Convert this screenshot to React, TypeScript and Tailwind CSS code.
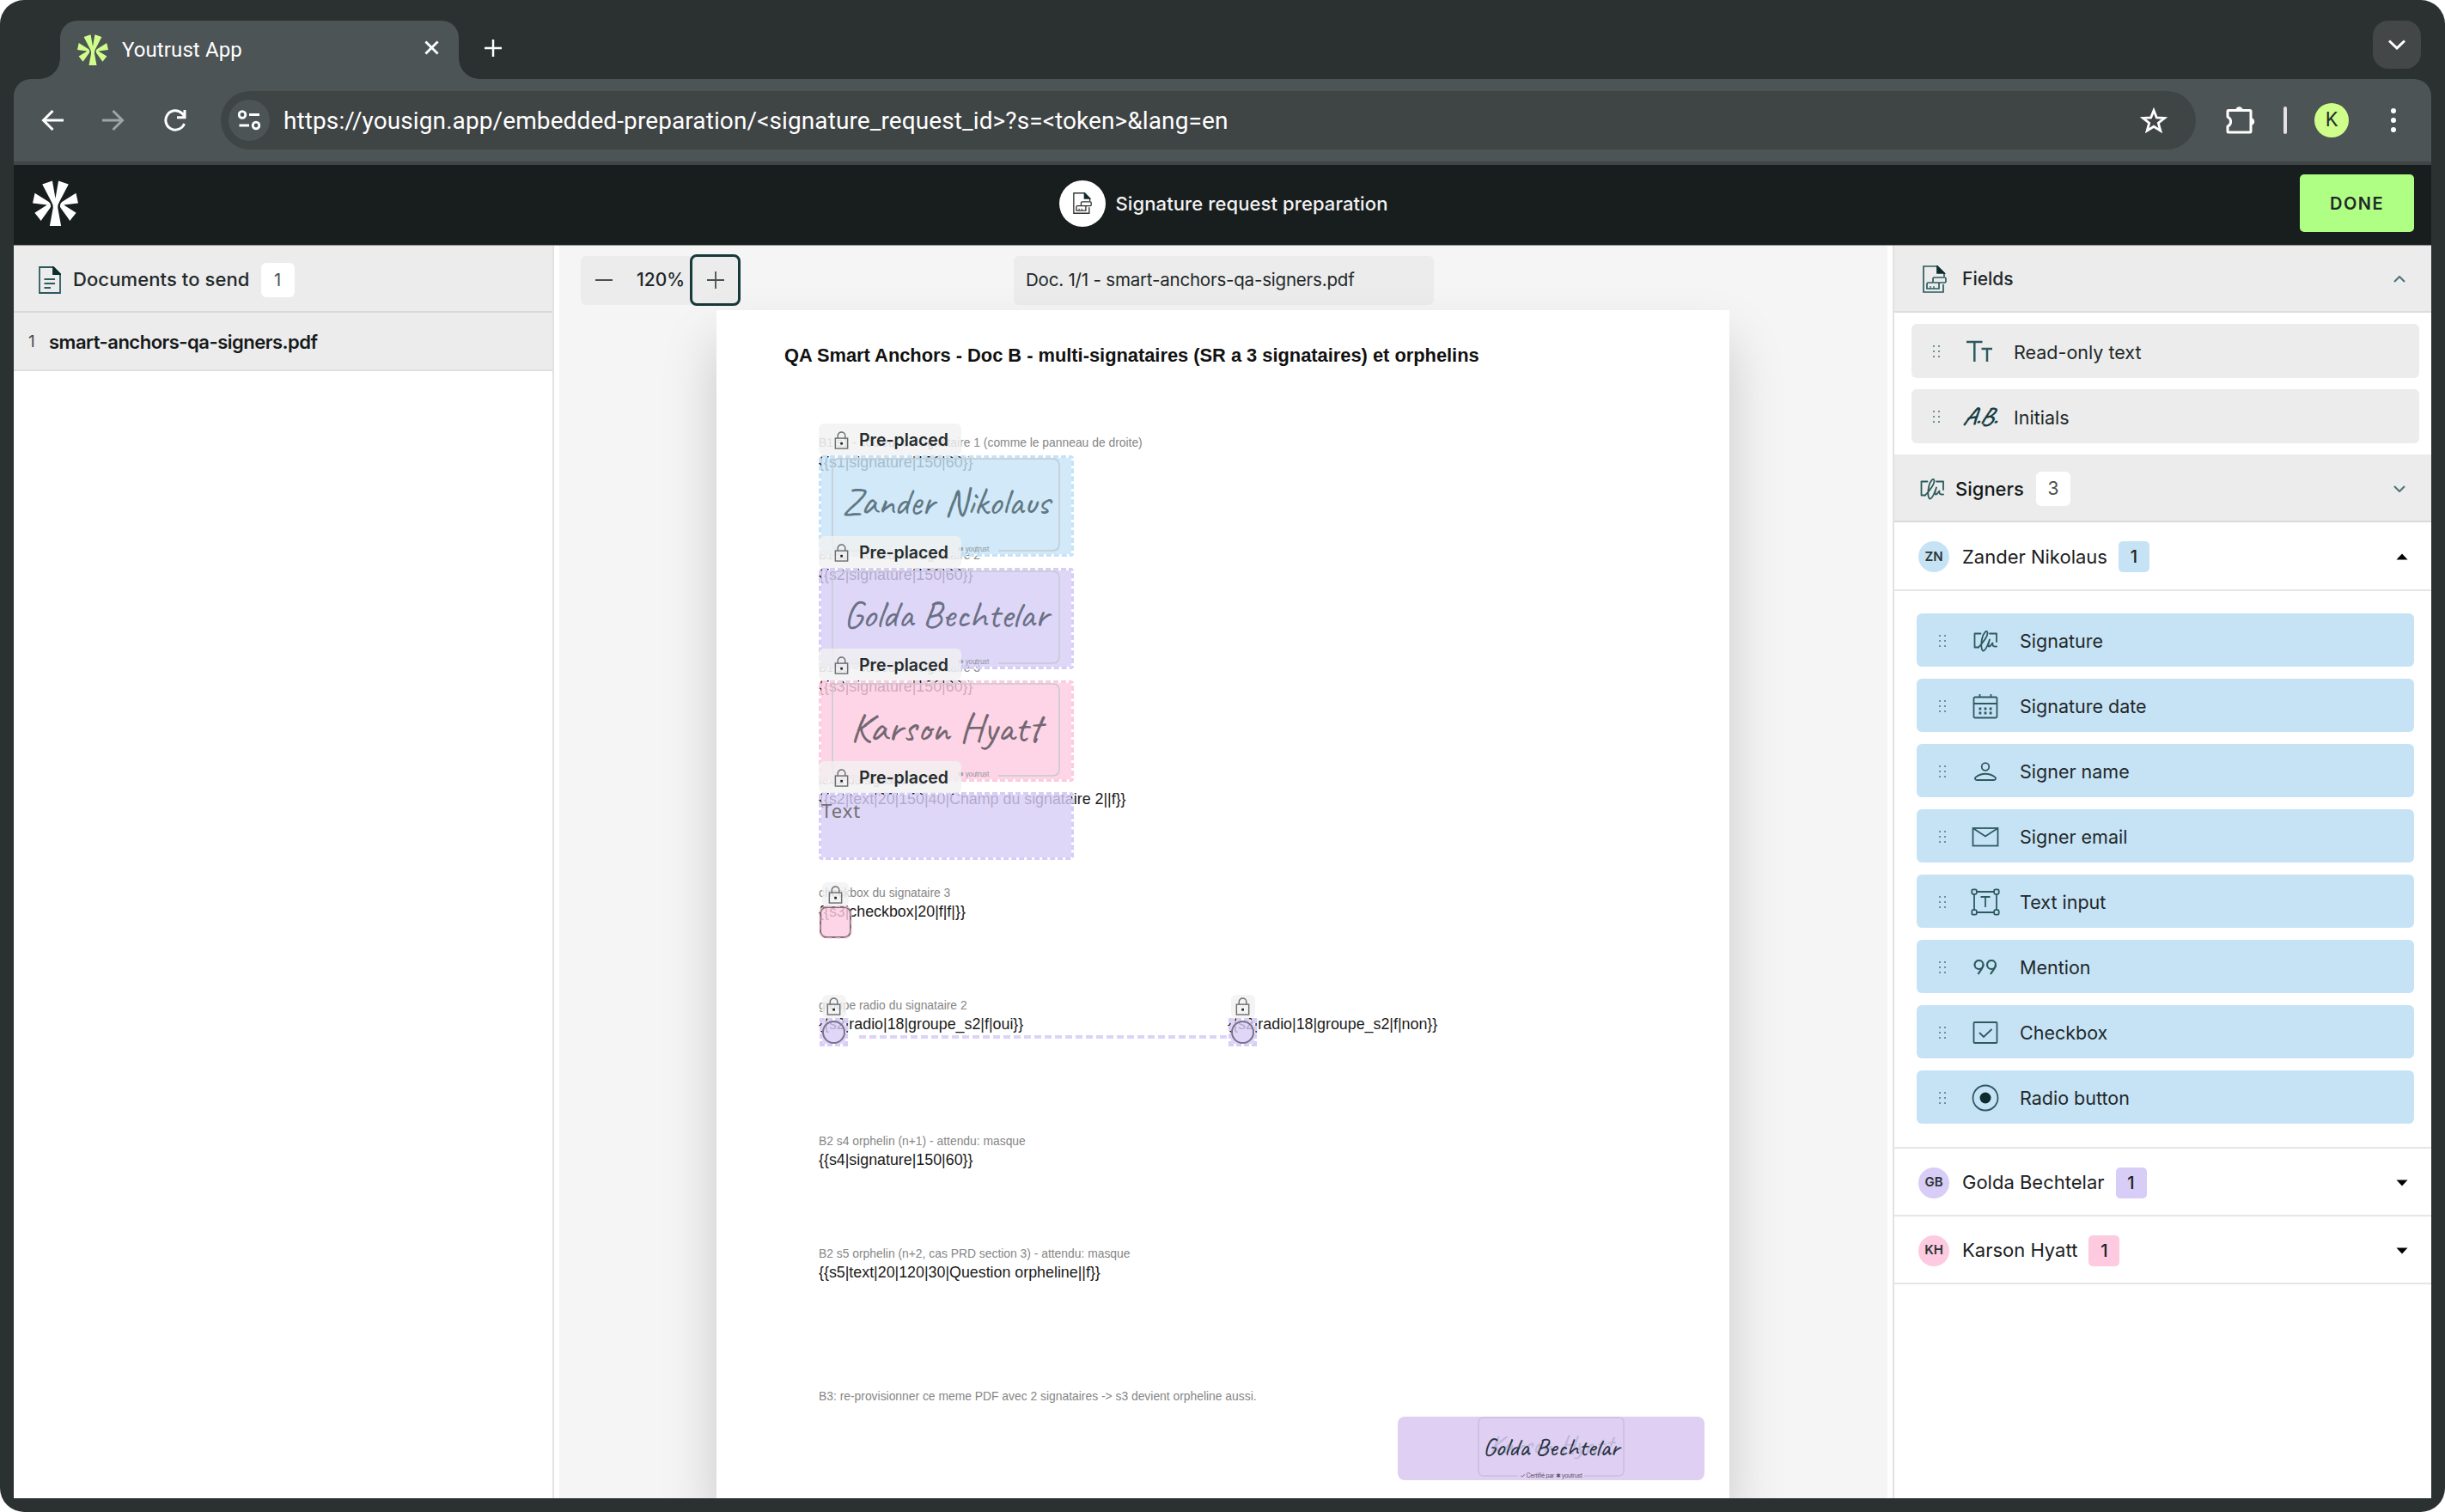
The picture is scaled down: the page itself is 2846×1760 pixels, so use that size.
import type { ReactNode } from 'react';
import { clsx } from 'clsx';

type IconProps = { className?: string };

const Logo = ({ className }: IconProps) => (
  <svg viewBox="0 0 52 52" fill="currentColor" className={className}>
    <path d="M11 4.5 22.5.5 26 20.5 29.5.5 41 4.5 30 25.5Q28.4 28.5 28.8 32L32.5 52H19.5L23.2 32Q23.6 28.5 22 25.5Z" />
    <path d="M2.5 14.5 18.5 24.5Q22 27.5 20 31.5L9.5 46 2.3 37 16.5 28 0 26Z" />
    <path d="M49.5 14.5 33.5 24.5Q30 27.5 32 31.5L42.5 46 49.7 37 35.5 28 52 26Z" />
  </svg>
);

const DocIcon = ({ className }: IconProps) => (
  <svg viewBox="0 0 26 32" fill="none" stroke="#2c5a5e" strokeWidth="1.8" className={className}>
    <path d="M1 1H17L25 9V31H1Z" />
    <path d="M17 1V9H25Z" fill="#0c2c2e" stroke="#0c2c2e" />
    <path d="M6.5 15H19M6.5 20H19M6.5 25H14" />
  </svg>
);

const FieldsIcon = ({ className }: IconProps) => (
  <svg viewBox="0 0 28 32" fill="none" stroke="currentColor" strokeWidth="1.7" className={className}>
    <path d="M25 13V9L17 1H1V31H24V22" />
    <path d="M17 1V9H25Z" fill="#0c2c2e" stroke="#0c2c2e" />
    <rect x="12" y="14" width="15" height="6" rx="1.5" />
    <path d="M12 20H6.5a1.5 1.5 0 0 0-1.5 1.5V27H19V20" />
    <path d="M9 27V24M13 27V24" strokeWidth="1.2" />
  </svg>
);

const SignatureIcon = () => (
  <svg viewBox="0 0 28 26" fill="none" stroke="#2c5a5e" strokeWidth="1.8" strokeLinecap="round" strokeLinejoin="round" className="h-[26px] w-7">
    <path d="M8.5 4.5H1.5V20.5H6M19 4.5H27V14" />
    <path d="M6 20.5C11 15 17 8 16.5 3.5C16-.5 11.5 3.5 10 11C8.5 19 9.5 25 12 24.5C15 24 17.5 15.5 19 11.5C17.5 16 16.5 19.5 18.5 19.5C20.5 19.5 21 16.5 22.5 15.5C22 19 23.5 20 27 19.5" />
  </svg>
);

const CalendarIcon = () => (
  <svg viewBox="0 0 30 30" fill="none" stroke="#2c5a5e" strokeWidth="1.8" className="size-[30px]">
    <rect x="1.5" y="4.5" width="27" height="24" rx="1.5" />
    <path d="M1.5 12H28.5M8.5 1V5M21.5 1V5" />
    <path d="M7.5 18H22.5M7.5 23H22.5" strokeWidth="2.8" strokeDasharray="2.8 3.3" />
  </svg>
);

const PersonIcon = () => (
  <svg viewBox="0 0 26 22" fill="none" stroke="#2c5a5e" strokeWidth="1.8" className="h-[22px] w-[26px]">
    <circle cx="13" cy="5.5" r="4.3" />
    <path d="M3 21H23C25.500 21 25.500 18.500 24 17.500C18 12.500 8 12.500 2 17.500C.5 18.500.5 21 3 21Z" />
  </svg>
);

const MailIcon = () => (
  <svg viewBox="0 0 32 24" fill="none" stroke="#2c5a5e" strokeWidth="1.8" className="h-6 w-8">
    <rect x="1.5" y="2" width="29" height="20.5" />
    <path d="M1.5 2 16 11.5 30.5 2" />
  </svg>
);

const TextInputIcon = () => (
  <svg viewBox="0 0 34 32" fill="none" stroke="#2c5a5e" strokeWidth="1.8" className="h-8 w-[34px]">
    <path d="M7 4H27M7 28H27M4 7V25M30 7V25M11.5 10H22.5M17 10V22" />
    <rect x="1.3" y="1.3" width="5.5" height="5.5" rx="1.5" />
    <rect x="27.2" y="1.3" width="5.5" height="5.5" rx="1.5" />
    <rect x="1.3" y="25.2" width="5.5" height="5.5" rx="1.5" />
    <rect x="27.2" y="25.2" width="5.5" height="5.5" rx="1.5" />
  </svg>
);

const MentionIcon = () => (
  <svg viewBox="0 0 28 18" fill="none" stroke="#2c5a5e" strokeWidth="2.2" className="h-[18px] w-7">
    <circle cx="6.5" cy="6" r="5" />
    <path d="M11.5 6C11.5 10 8 12.5 5.5 17" />
    <circle cx="21" cy="6" r="5" />
    <path d="M26 6C26 10 22.5 12.5 20 17" />
  </svg>
);

const CheckboxIcon = () => (
  <svg viewBox="0 0 30 26" fill="none" stroke="#2c5a5e" strokeWidth="1.8" className="h-[26px] w-[30px]">
    <rect x="1.5" y="1" width="27" height="24" rx="1" />
    <path d="M8 13 13 18 22.5 9" />
  </svg>
);

const RadioIcon = () => (
  <svg viewBox="0 0 32 32" fill="none" stroke="#2c5a5e" strokeWidth="1.8" className="size-8">
    <circle cx="16" cy="16" r="14.5" />
    <circle cx="16" cy="16" r="6.5" fill="#0c2c2e" stroke="none" />
  </svg>
);

const ReadOnlyTextIcon = () => (
  <svg viewBox="0 0 32 26" fill="none" stroke="#2c5a5e" strokeWidth="2.5" className="h-[26px] w-8">
    <path d="M1 2H19.5M10.3 2V25M18.5 10H31M25 10V25" />
  </svg>
);

const InitialsIcon = () => (
  <span className="text-[29px] font-bold italic tracking-[-0.5px] text-[#173f43] [font-family:Caveat,cursive]">A.B.</span>
);

const LockIcon = () => (
  <svg viewBox="0 0 17 22" fill="none" stroke="#6b6f70" strokeWidth="1.5" className="h-[21px] w-[17px] shrink-0">
    <rect x="1" y="8.5" width="15" height="12.5" />
    <path d="M4 8.5V5.5a4.5 4.5 0 0 1 9 0V8.5" />
    <rect x="7.2" y="13.5" width="2.8" height="2.8" fill="#222" stroke="none" />
  </svg>
);

const Grip = () => (
  <svg viewBox="0 0 10 16" fill="#6d9196" className="h-4 w-2.5">
    {[2, 8, 14].map((y) => (
      <g key={y}>
        <rect x="1" y={y - 1} width="2" height="2" />
        <rect x="7" y={y - 1} width="2" height="2" />
      </g>
    ))}
  </svg>
);

const Chevron = ({ up }: { up?: boolean }) => (
  <svg viewBox="0 0 14 8" fill="none" stroke="#4a7377" strokeWidth="2" className={clsx('h-2 w-3.5', up && 'rotate-180')}>
    <path d="M1 1 7 7 13 1" />
  </svg>
);

const Caret = ({ up }: { up?: boolean }) => (
  <svg viewBox="0 0 14 8" fill="#000" className={clsx('h-2 w-3.5', up && 'rotate-180')}>
    <path d="M.5.5H13.5L7 7.500Z" />
  </svg>
);

const SIGNER_FIELDS = [
  { label: 'Signature', icon: SignatureIcon },
  { label: 'Signature date', icon: CalendarIcon },
  { label: 'Signer name', icon: PersonIcon },
  { label: 'Signer email', icon: MailIcon },
  { label: 'Text input', icon: TextInputIcon },
  { label: 'Mention', icon: MentionIcon },
  { label: 'Checkbox', icon: CheckboxIcon },
  { label: 'Radio button', icon: RadioIcon },
];

// Centre line of every text run printed on the PDF page
const PDF_LABELS = [
  { y: 154, text: 'B1 s1 - couleur du signataire 1 (comme le panneau de droite)' },
  { y: 285, text: 'B1 s2 - couleur du signataire 2' },
  { y: 416, text: 'B1 s3 - couleur du signataire 3' },
  { y: 547, text: 'texte du signataire 2' },
  { y: 678, text: 'checkbox du signataire 3' },
  { y: 809, text: 'groupe radio du signataire 2' },
  { y: 967, text: 'B2 s4 orphelin (n+1) - attendu: masque' },
  { y: 1098, text: 'B2 s5 orphelin (n+2, cas PRD section 3) - attendu: masque' },
  { y: 1264, text: 'B3: re-provisionner ce meme PDF avec 2 signataires -> s3 devient orpheline aussi.' },
];

const PDF_ANCHORS = [
  { x: 119, y: 177, text: '{{s1|signature|150|60}}' },
  { x: 119, y: 308, text: '{{s2|signature|150|60}}' },
  { x: 119, y: 438, text: '{{s3|signature|150|60}}' },
  { x: 119, y: 569, text: '{{s2|text|20|150|40|Champ du signataire 2||f}}' },
  { x: 119, y: 700, text: '{{s3|checkbox|20|f|f|}}' },
  { x: 119, y: 831, text: '{{s2|radio|18|groupe_s2|f|oui}}' },
  { x: 595, y: 831, text: '{{s2|radio|18|groupe_s2|f|non}}' },
  { x: 119, y: 989, text: '{{s4|signature|150|60}}' },
  { x: 119, y: 1120, text: '{{s5|text|20|120|30|Question orpheline||f}}' },
];

const SIGNATURE_FIELDS = [
  { top: 169, name: 'Zander Nikolaus', box: 'border-[#c5e3f6] bg-[#c5e3f6]/80', ink: 'text-[44px] text-[#5f7783]' },
  { top: 300, name: 'Golda Bechtelar', box: 'border-[#d7cdf6] bg-[#d7cdf6]/80', ink: 'text-[45px] text-[#6a7085]' },
  { top: 431, name: 'Karson Hyatt', box: 'border-[#fecae0] bg-[#fecae0]/80', ink: 'text-[48px] text-[#736772]' },
];

function PrePlacedTag({ top }: { top: number }) {
  return (
    <div className="absolute left-[119px] flex h-[37px] w-[166px] items-center rounded-md bg-[#f1f1f1]/80 pl-[18px] pt-0.5" style={{ top }}>
      <LockIcon />
      <span className="ml-3 text-[19.5px] font-semibold text-[#262c2e]">Pre-placed</span>
    </div>
  );
}

function RadioField({ left }: { left: number }) {
  return (
    <div className="absolute top-[797px] flex w-[33px] flex-col items-center" style={{ left }}>
      <div className="flex h-[27px] w-7 items-center justify-center rounded-md bg-[#f1f1f1]/80">
        <LockIcon />
      </div>
      <div className="flex size-[33px] items-center justify-center border-[3px] border-dashed border-[#d7cdf6] bg-[#d7cdf6]/80 bg-clip-padding">
        <div className="size-[27px] shrink-0 rounded-full border-2 border-[#77728a]" />
      </div>
    </div>
  );
}

function PdfPage() {
  return (
    <div className="relative h-[1383px] w-[1179px] bg-white shadow-[0_36px_60px_rgba(0,0,0,0.18)]">
      <div className="absolute left-[79px] top-[40px] whitespace-nowrap text-[21.83px] font-bold leading-[26px] text-[#111] [font-family:'Liberation_Sans',sans-serif]">
        QA Smart Anchors - Doc B - multi-signataires (SR a 3 signataires) et orphelins
      </div>
      {PDF_LABELS.map(({ y, text }) => (
        <div key={text} className="absolute left-[119px] -translate-y-1/2 whitespace-nowrap text-[13.87px] leading-4 text-[#868686] [font-family:'Liberation_Sans',sans-serif]" style={{ top: y }}>
          {text}
        </div>
      ))}
      {PDF_ANCHORS.map(({ x, y, text }) => (
        <div key={text} className="absolute -translate-y-1/2 whitespace-nowrap text-[17.83px] leading-5 text-[#1a1a1a] [font-family:'Liberation_Sans',sans-serif]" style={{ left: x, top: y }}>
          {text}
        </div>
      ))}

      {SIGNATURE_FIELDS.map(({ top, name, box, ink }) => (
        <div key={name} className={clsx('absolute left-[119px] h-[118px] w-[297px] rounded-[4px] border-[3px] border-dashed bg-clip-padding', box)} style={{ top }}>
          <div className="relative ml-3 flex h-[109px] w-[266px] items-center justify-center">
            <svg viewBox="0 0 266 109" fill="none" stroke="#c3cacf" strokeWidth="1.5" className="absolute inset-0">
              <path d="M122 108H9Q1 108 1 100V9Q1 1 9 1H257Q265 1 265 9V100Q265 108 257 108H194" />
            </svg>
            <span className={clsx('whitespace-nowrap pb-1.5 leading-none [font-family:Caveat,cursive]', ink)}>{name}</span>
            <span className="absolute left-[147px] top-[103px] whitespace-nowrap text-[7.5px] leading-none tracking-[-0.2px] text-[#8a9196]">✱ youtrust</span>
          </div>
        </div>
      ))}
      <div className="absolute left-[119px] top-[561px] h-[79px] w-[297px] rounded-[4px] border-[3px] border-dashed border-[#d7cdf6] bg-[#d7cdf6]/80 bg-clip-padding">
        <div className="mt-1 text-[22px] leading-[28px] tracking-[1px] text-[#707070] [font-family:'Noto_Sans',sans-serif]">Text</div>
      </div>
      {[132, 263, 394, 525].map((top) => (
        <PrePlacedTag key={top} top={top} />
      ))}

      <div className="absolute left-[120px] top-[666px] flex w-[37px] flex-col items-center">
        <div className="flex h-7 w-[31px] items-center justify-center rounded-md bg-[#f1f1f1]/80">
          <LockIcon />
        </div>
        <div className="size-[37px] rounded-[8px] border-2 border-[#7c6d75] bg-[#fecae0]/80 outline-dashed outline-2 -outline-offset-1 outline-[#fecae0]/70" />
      </div>

      <div className="absolute left-[166px] top-[844px] h-1 w-[430px] bg-[repeating-linear-gradient(90deg,#dcd3f8_0,#dcd3f8_8px,transparent_8px,transparent_12px)]" />
      <RadioField left={120} />
      <RadioField left={596} />

      <div className="absolute left-[793px] top-[1288px] flex h-[74px] w-[357px] justify-center rounded-lg bg-[#dfcff3]">
        <div className="relative flex h-[70px] w-[171px] items-center justify-center">
          <svg viewBox="0 0 171 70" fill="none" stroke="#cdbfdf" strokeWidth="1.5" className="absolute inset-0">
            <path d="M47 69H7Q1 69 1 63V7Q1 1 7 1H164Q170 1 170 7V63Q170 69 164 69H124" />
          </svg>
          <span className="absolute inset-x-0 top-[16px] text-center text-[31px] leading-[34px] text-[#bcb8d9] [font-family:Caveat,cursive]">Karson Hyatt</span>
          <span className="relative whitespace-nowrap text-[30px] font-medium leading-none text-[#26343f] [font-family:Caveat,cursive]">Golda Bechtelar</span>
          <span className="absolute inset-x-0 top-[65px] whitespace-nowrap text-center text-[7px] leading-none tracking-[-0.4px] text-[#5b5466]">✓ Certifié par ✱ youtrust</span>
        </div>
      </div>
    </div>
  );
}

function FieldChip({ label, children, blue }: { label: string; children: ReactNode; blue?: boolean }) {
  return (
    <div className={clsx('flex items-center rounded-md pt-px', blue ? 'h-[62px] bg-[#c6e3f6] pl-[25px]' : 'h-[63px] bg-[#ececec] pl-6')}>
      <Grip />
      <span className="ml-[25px] flex w-10 items-center justify-center">{children}</span>
      <span className="ml-5 pt-0.5 text-[21.5px] text-[#222829]">{label}</span>
    </div>
  );
}

function SignerRow({ initials, name, color, open }: { initials: string; name: string; color: string; open?: boolean }) {
  return (
    <div className="flex h-full items-center pl-7 pr-[27px] pt-0.5">
      <span className={clsx('flex size-9 items-center justify-center rounded-full text-[15px] font-semibold text-[#2c3335]', color)}>{initials}</span>
      <span className="ml-[15px] text-[22px] text-[#1c2122]">{name}</span>
      <span className={clsx('ml-[13px] flex size-9 items-center justify-center rounded-[5px] text-[20px] font-medium text-[#1c2122]', color)}>1</span>
      <span className="ml-auto">
        <Caret up={open} />
      </span>
    </div>
  );
}

function BrowserChrome() {
  return (
    <>
      <div className="flex h-[92px] items-end pl-[46px] pr-7">
        <div className="size-6 bg-[radial-gradient(circle_at_0_0,transparent_23.5px,#4d5455_24px)]" />
        <div className="flex h-[68px] w-[464px] items-center rounded-t-[20px] bg-[#4d5455] pl-5 pr-[23px]">
          <Logo className="size-9 text-[#cfff8a]" />
          <span className="ml-4 text-[24px] tracking-[0.1px] text-white [font-family:Roboto,sans-serif]">Youtrust App</span>
          <svg viewBox="0 0 18 18" stroke="#fff" strokeWidth="3" className="mb-1.5 ml-auto size-[17px]">
            <path d="M1.5 1.5 16.5 16.5M16.5 1.5 1.5 16.5" />
          </svg>
        </div>
        <div className="size-6 bg-[radial-gradient(circle_at_100%_0,transparent_23.5px,#4d5455_24px)]" />
        <svg viewBox="0 0 20 20" stroke="#fff" strokeWidth="2.5" className="mb-[26px] ml-1.5 size-5">
          <path d="M10 0V20M0 10H20" />
        </svg>
        <div className="mb-3 ml-auto flex size-14 items-center justify-center rounded-[18px] bg-[#434747]">
          <svg viewBox="0 0 20 12" fill="none" stroke="#fff" strokeWidth="3" className="h-3 w-5">
            <path d="M1 1.5 10 10 19 1.5" />
          </svg>
        </div>
      </div>
      <div className="mx-4 flex h-[100px] items-center rounded-t-[20px] border-b-4 border-[#3f4444] bg-[#4d5455] pl-8">
        <svg viewBox="0 0 26 24" fill="none" stroke="#fff" strokeWidth="3" className="h-6 w-[26px]">
          <path d="M13.5 1 2.5 12 13.5 23M2.5 12H26" />
        </svg>
        <svg viewBox="0 0 26 24" fill="none" stroke="#a0a4a4" strokeWidth="3" className="ml-[45px] h-6 w-[26px]">
          <path d="M12.5 1 23.5 12 12.5 23M23.5 12H0" />
        </svg>
        <svg viewBox="0 0 26 26" fill="none" stroke="#fff" strokeWidth="3" className="ml-[46px] size-[26px]">
          <path d="M23.5 17A11.2 11.2 0 1 1 20.8 4.8L24 8.5M24 1V9.8H15" />
        </svg>
        <div className="ml-10 flex h-[68px] w-[2299px] items-center rounded-full bg-[#3f4444] pl-[9px] pr-[33px]">
          <div className="flex size-12 items-center justify-center rounded-full bg-[#4d5455]">
            <svg viewBox="0 0 26 24" fill="none" stroke="#fff" strokeWidth="2.8" className="h-6 w-[26px]">
              <circle cx="5" cy="5.5" r="3.8" />
              <path d="M13 5.5H25M1.5 18H13" />
              <circle cx="21" cy="18" r="3.8" />
            </svg>
          </div>
          <span className="ml-4 whitespace-nowrap pt-0.5 text-[28px] tracking-[0.1px] text-white [font-family:Roboto,sans-serif]">
            {'https://yousign.app/embedded-preparation/<signature_request_id>?s=<token>&lang=en'}
          </span>
          <svg viewBox="0 0 32 31" fill="none" stroke="#fff" strokeWidth="2.8" className="ml-auto h-[31px] w-8">
            <path d="M16 3.5 19.3 12 28.5 12.4 21.3 18.2 23.8 27.2 16 22.2 8.2 27.2 10.7 18.2 3.5 12.4 12.7 12Z" />
          </svg>
        </div>
        <svg viewBox="0 0 34 32" fill="none" stroke="#fff" strokeWidth="3" strokeLinejoin="round" className="ml-[35px] h-8 w-[34px]">
          <path d="M2 5.5Q2 4.5 3 4.5H28Q29 4.5 29 5.5V29Q29 30 28 30H3Q2 30 2 29V23A6 6 0 0 0 2 12Z" />
          <path d="M12 4.5A3.5 3.5 0 0 1 19 4.5ZM29 14A3.5 3.5 0 0 1 29 21Z" fill="#fff" strokeWidth="1.5" />
        </svg>
        <span className="ml-[33px] h-8 w-1 rounded-full bg-[#e3dfe3]" />
        <span className="ml-8 flex size-10 items-center justify-center rounded-full bg-[#cfff8a] text-[23px] text-[#2b3030] [font-family:Roboto,sans-serif]">K</span>
        <span className="ml-[49px] flex flex-col gap-[5px]">
          <i className="size-1.5 rounded-full bg-white" />
          <i className="size-1.5 rounded-full bg-white" />
          <i className="size-1.5 rounded-full bg-white" />
        </span>
      </div>
    </>
  );
}

function DocumentsPanel() {
  return (
    <aside className="h-full w-[629px] shrink-0 border-r-2 border-[#e2e2e2] bg-white">
      <div className="flex h-[78px] items-center border-b-2 border-[#d6d9d9] bg-[#ececec] pl-[29px] pt-[3px]">
        <DocIcon className="h-8 w-[26px]" />
        <span className="ml-[14px] text-[22px] font-medium tracking-[0.1px] text-[#222829]">Documents to send</span>
        <span className="ml-[13px] flex h-10 w-[39px] items-center justify-center rounded-md bg-white text-[20px] text-[#4b4f50]">1</span>
      </div>
      <div className="flex h-[68px] items-center border-b-2 border-[#e0e0e0] bg-[#ececec] pl-[17px] pt-0.5">
        <span className="w-6 text-[19px] text-[#4b4f50]">1</span>
        <span className="text-[22px] font-semibold tracking-[-0.5px] text-[#161a1b]">smart-anchors-qa-signers.pdf</span>
      </div>
    </aside>
  );
}

function Workspace() {
  return (
    <main className="flex h-full flex-1 flex-col overflow-hidden border-x-[6px] border-white bg-[#f5f5f5]">
      <div className="flex h-[75px] shrink-0 items-center pl-[25px] pt-[5px]">
        <div className="flex h-[57px] w-[155px] items-center rounded-md bg-[#ececec] pl-[17px]">
          <span className="h-0.5 w-5 bg-[#4b4f50]" />
          <span className="ml-[28px] text-[21px] font-medium text-[#222829]">120%</span>
        </div>
        <button className="-ml-7 flex h-[60px] w-[59px] items-center justify-center rounded-lg border-[3px] border-[#17393b] bg-[#ececec]">
          <svg viewBox="0 0 20 20" stroke="#4b4f50" strokeWidth="1.8" className="size-5">
            <path d="M10 0V20M0 10H20" />
          </svg>
        </button>
        <div className="ml-[318px] flex h-[57px] w-[489px] items-center rounded-md bg-[#ececec] pl-[14px] text-[20.5px] tracking-[-0.2px] text-[#222829]">
          Doc. 1/1 - smart-anchors-qa-signers.pdf
        </div>
      </div>
      <div className="pl-[183px]">
        <PdfPage />
      </div>
    </main>
  );
}

function FieldsPanel() {
  return (
    <aside className="h-full w-[627px] shrink-0 border-l-2 border-[#e2e2e2] bg-white">
      <div className="flex h-[78px] items-center border-b-2 border-[#dcdede] bg-[#ececec] pl-[33px] pr-[30px] pt-0.5">
        <FieldsIcon className="h-8 w-7 text-[#2c5a5e]" />
        <span className="ml-[18px] text-[21px] font-medium text-[#222829]">Fields</span>
        <span className="ml-auto">
          <Chevron up />
        </span>
      </div>
      <div className="flex h-[165px] flex-col gap-[13px] pl-5 pr-[14px] pt-[13px]">
        <FieldChip label="Read-only text">
          <ReadOnlyTextIcon />
        </FieldChip>
        <FieldChip label="Initials">
          <InitialsIcon />
        </FieldChip>
      </div>
      <div className="flex h-[79px] items-center border-b-2 border-[#d9dbdb] bg-[#ececec] pl-[30px] pr-[30px] pt-[3px]">
        <SignatureIcon />
        <span className="ml-[13px] text-[22px] font-medium text-[#161a1b]">Signers</span>
        <span className="ml-[14px] flex size-10 items-center justify-center rounded-md bg-white text-[21px] text-[#4b4f50]">3</span>
        <span className="ml-auto">
          <Chevron />
        </span>
      </div>
      <div className="h-20 border-b-2 border-[#e6e6e6]">
        <SignerRow initials="ZN" name="Zander Nikolaus" color="bg-[#c6e3f6]" open />
      </div>
      <div className="flex h-[649px] flex-col gap-[14px] border-b-2 border-[#e6e6e6] pl-[26px] pr-5 pt-[26px]">
        {SIGNER_FIELDS.map(({ label, icon: Icon }) => (
          <FieldChip key={label} label={label} blue>
            <Icon />
          </FieldChip>
        ))}
      </div>
      <div className="h-[79px] border-b-2 border-[#e6e6e6]">
        <SignerRow initials="GB" name="Golda Bechtelar" color="bg-[#d7cdf6]" />
      </div>
      <div className="h-[79px] border-b-2 border-[#e6e6e6]">
        <SignerRow initials="KH" name="Karson Hyatt" color="bg-[#fecae0]" />
      </div>
    </aside>
  );
}

export default function App() {
  return (
    <div className="h-[1760px] w-[2846px] bg-white [font-family:Inter,sans-serif]">
      <div className="flex h-full w-full flex-col overflow-hidden rounded-[28px] bg-[#2b3030]">
        <BrowserChrome />
        <header className="mx-4 grid h-[94px] shrink-0 grid-cols-3 items-center border-b border-[#8b8e8e] bg-[#181d1d] pb-1 pl-[22px] pr-5">
          <Logo className="size-[53px] text-white" />
          <div className="flex items-center justify-center gap-3">
            <span className="flex size-[54px] items-center justify-center rounded-full bg-white">
              <FieldsIcon className="h-[25px] w-[22px] text-[#333]" />
            </span>
            <span className="pt-0.5 text-[22px] font-medium tracking-[0.1px] text-[#f2f3f3]">Signature request preparation</span>
          </div>
          <button className="h-[67px] w-[133px] justify-self-end rounded-[5px] bg-[#b0ff85] text-[20px] font-semibold tracking-[1.5px] text-[#222829]">DONE</button>
        </header>
        <div className="mx-4 flex h-[1458px] shrink-0 overflow-hidden bg-white">
          <DocumentsPanel />
          <Workspace />
          <FieldsPanel />
        </div>
      </div>
    </div>
  );
}
